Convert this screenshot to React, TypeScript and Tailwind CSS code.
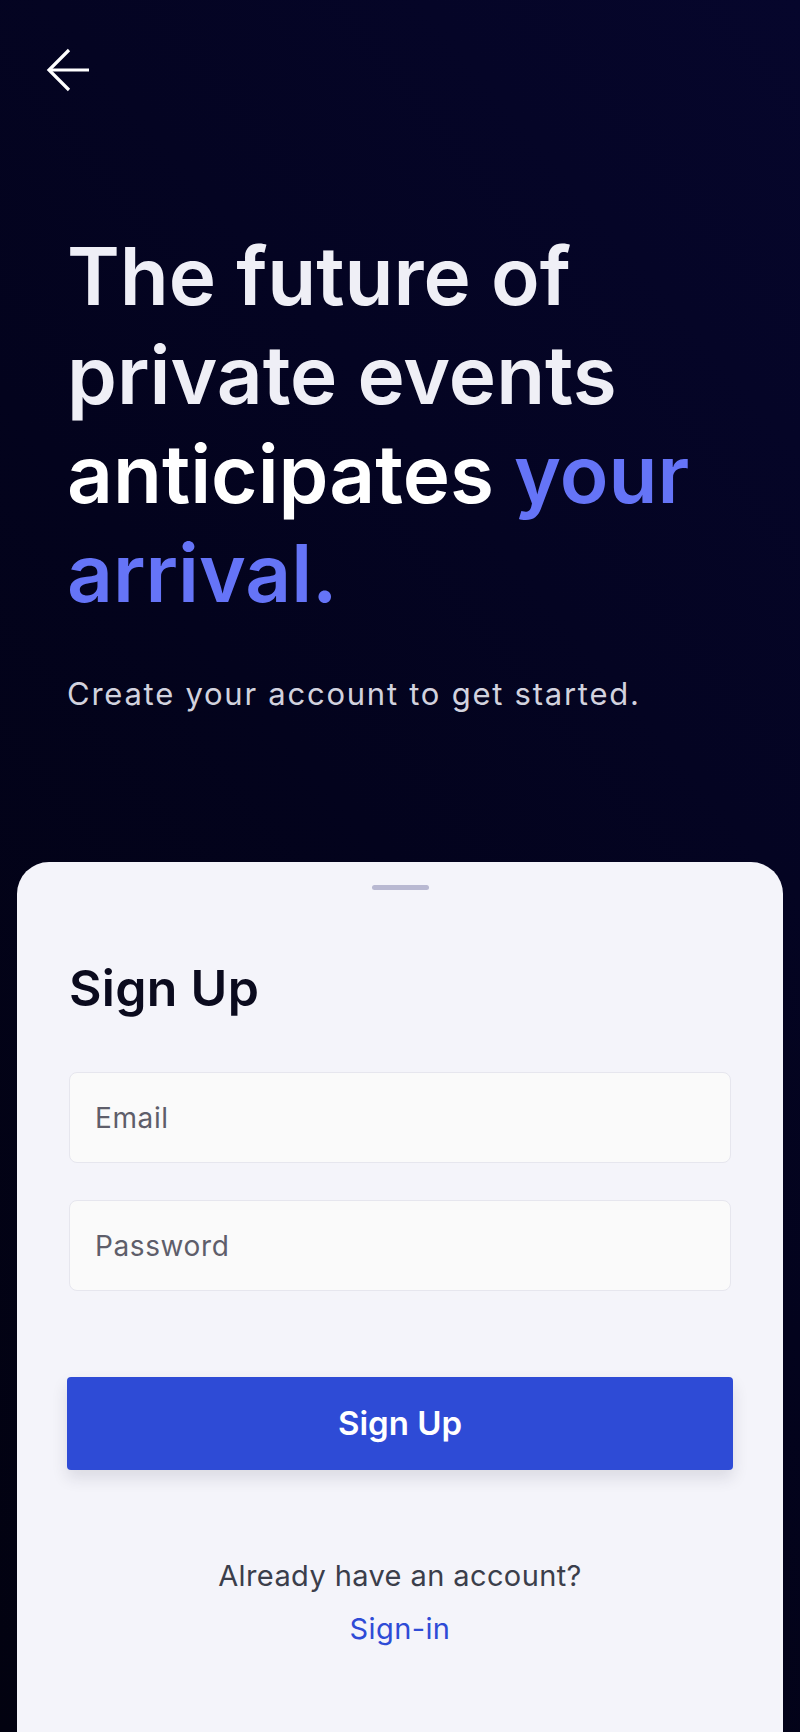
import React from "react";

const BackArrow = () => (
  <svg width="44" height="44" viewBox="0 0 44 44" fill="none" stroke="white" strokeWidth="3.2">
    <path d="M43 22H3" />
    <path d="M23 2L3 22l20 20" />
  </svg>
);

export default function App() {
  return (
    <div
      className="h-[1732px] w-full flex flex-col overflow-hidden bg-[linear-gradient(50deg,#020210_0%,#03031d_50%,#06062c_100%)]"
      style={{ fontFamily: "Inter, 'Noto Sans', sans-serif" }}
    >
      {/* Top bar */}
      <div className="pt-[48px] pl-[46px]">
        <button className="block">
          <BackArrow />
        </button>
      </div>

      {/* Hero */}
      <div className="px-[67px] pt-[134px]">
        <h1 className="text-[80px] leading-[99px] font-semibold text-[#efeff6]">
          The future of
          <br />
          private events
          <br />
          <span className="text-white">anticipates</span>{" "}
          <span className="text-[#6574f7]">your arrival.</span>
        </h1>
        <p className="mt-[50px] text-[31px] leading-[44px] tracking-[1.75px] text-[#d2d2de]">
          Create your account to get started.
        </p>
      </div>

      {/* Card */}
      <div className="mt-[146px] mx-[17px] flex-1 bg-[#f4f4fa] rounded-t-[32px] flex flex-col">
        <div className="mt-[23px] mx-auto w-[57px] h-[5px] rounded-full bg-[#b9b9d2]" />

        <div className="px-[52px]">
          <h2 className="mt-[68px] text-[50px] leading-[60px] font-semibold tracking-[0.3px] text-[#0b0b1e]">
            Sign Up
          </h2>

          <div className="mt-[54px] flex flex-col gap-[37px]">
            <input
              type="email"
              placeholder="Email"
              className="h-[91px] w-full px-[25px] rounded-[8px] border border-[#e6e6ee] bg-[#fafafa] text-[28px] tracking-[0.6px] text-[#1f1f2b] placeholder:text-[#5e5e6a] outline-none"
            />
            <input
              type="password"
              placeholder="Password"
              className="h-[91px] w-full px-[25px] rounded-[8px] border border-[#e6e6ee] bg-[#fafafa] text-[28px] tracking-[0.6px] text-[#1f1f2b] placeholder:text-[#5e5e6a] outline-none"
            />
          </div>

          <button className="mt-[86px] -mx-[2px] w-[calc(100%+4px)] h-[93px] rounded-[4px] bg-[#2e4bd6] text-white text-[33px] font-semibold shadow-[0_8px_16px_rgba(30,30,60,0.12)]">
            Sign Up
          </button>

          <div className="mt-[79px] text-center text-[29px] leading-[53px] tracking-[0.4px]">
            <p className="text-[#3b3e4b]">Already have an account?</p>
            <a className="text-[#2e4bd6]" href="#">
              Sign-in
            </a>
          </div>
        </div>
      </div>
    </div>
  );
}
